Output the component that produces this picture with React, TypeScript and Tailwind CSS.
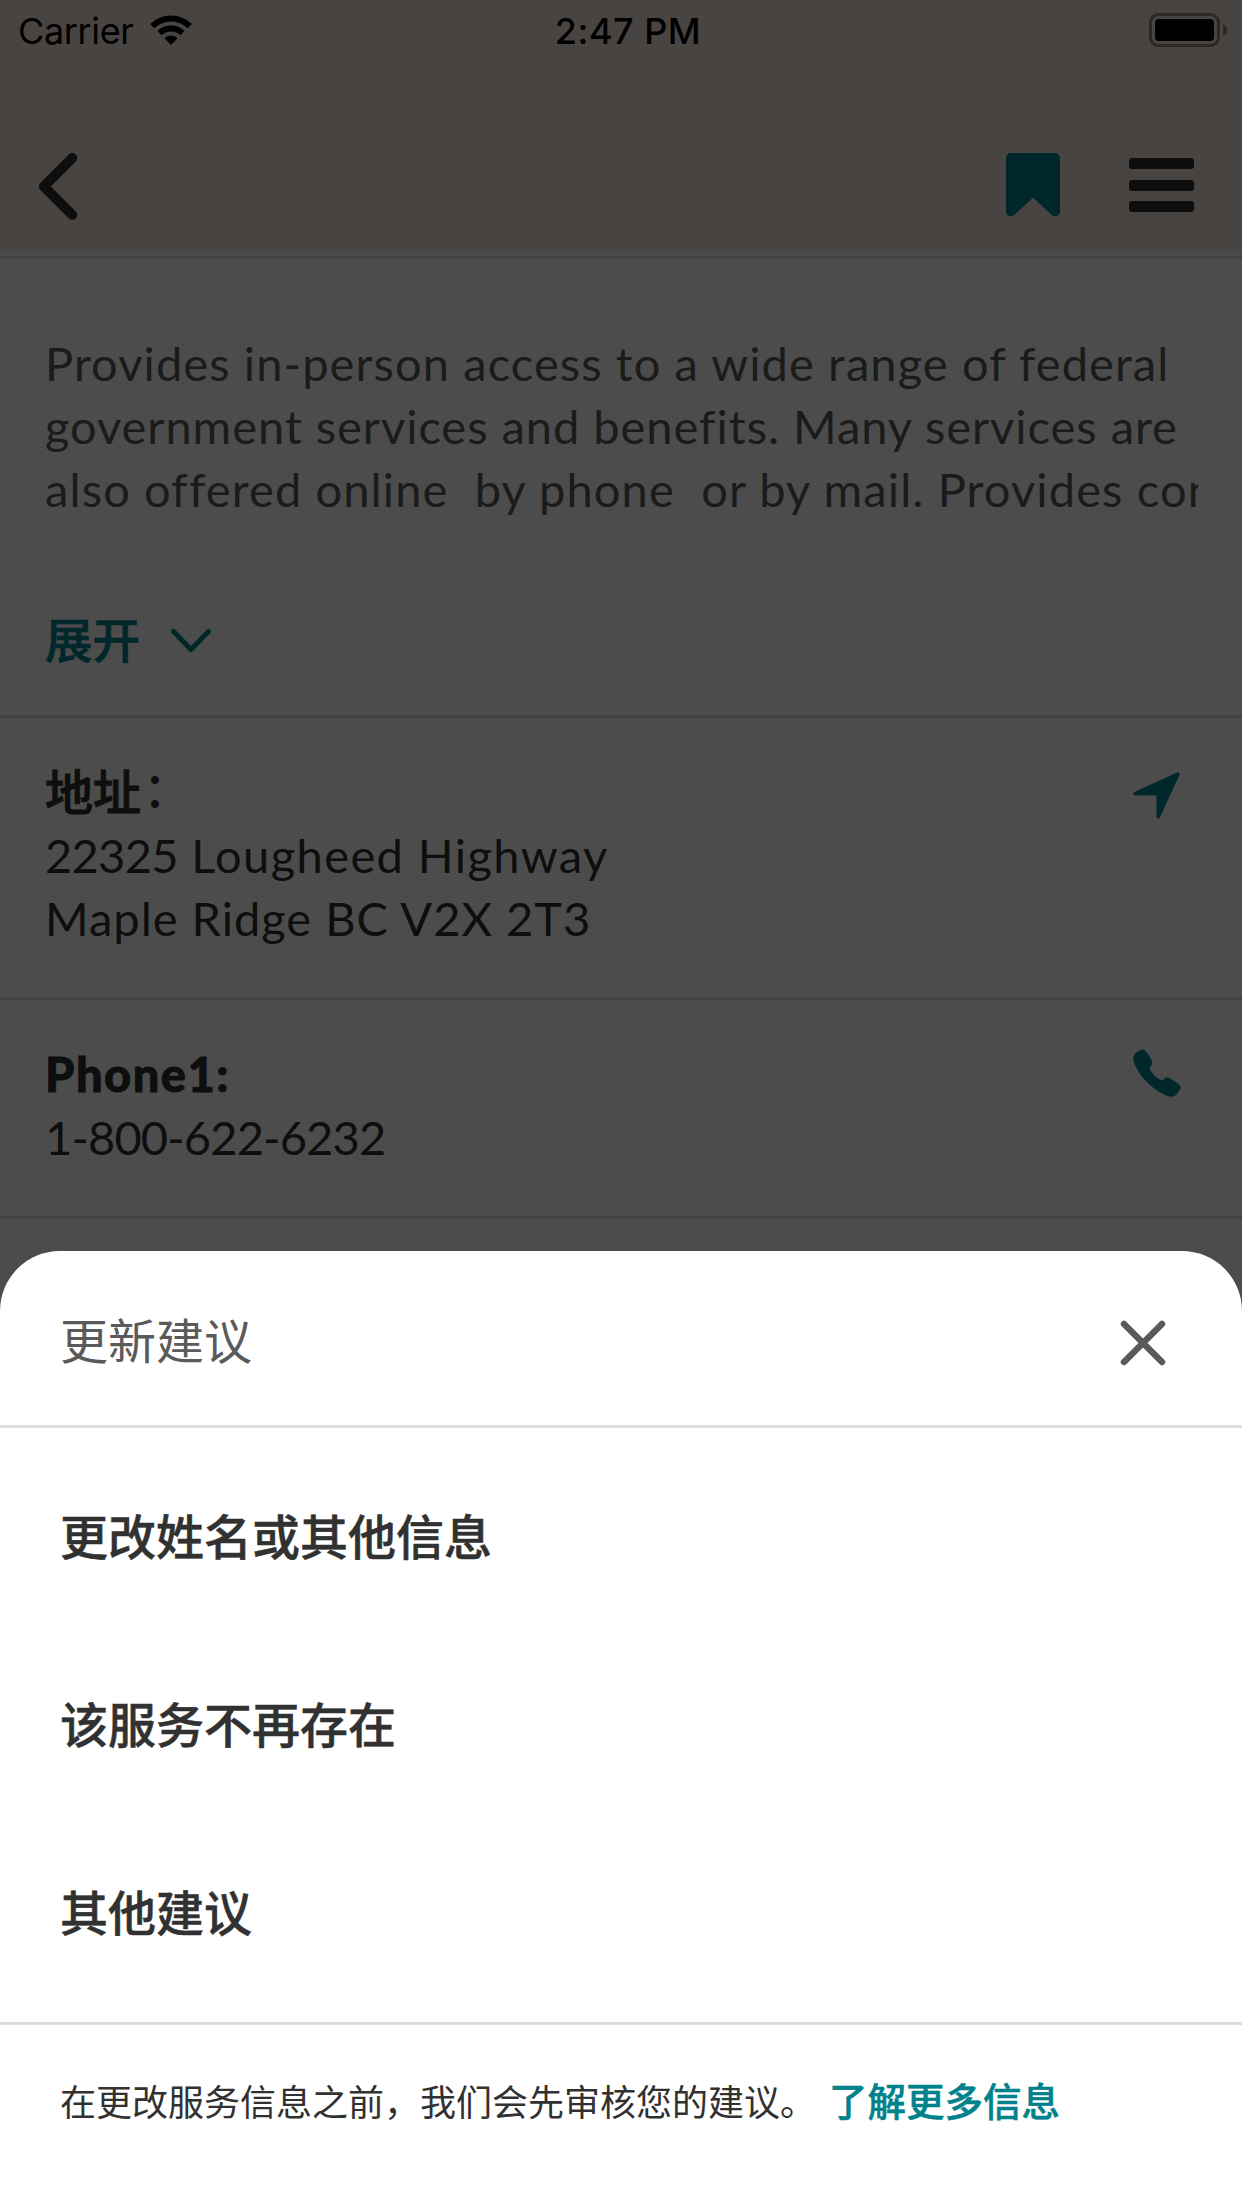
import type { ReactNode } from "react";
import { IoCall, IoNavigate } from "react-icons/io5";

const cjk = "font-['Noto_Sans_CJK_SC',sans-serif]";
const latin = "font-['Lato','Noto_Sans_CJK_SC',sans-serif]";

function StatusBar() {
  return (
    <div className="grid h-[60px] grid-cols-[1fr_auto_1fr] items-start font-['Inter',sans-serif] text-[36px] leading-[62px] text-black">
      <div className="flex pl-[18px]">
        <span className="w-[132px] tracking-[-0.35px]">Carrier</span>
        <svg className="mt-[15px] h-[30px] w-[42px]" viewBox="0 0 42 30" fill="none">
          <path d="M2.2 11.2a26.8 26.8 0 0 1 37.6 0" stroke="#000" strokeWidth="6" />
          <path d="M9.6 18.2a16.4 16.4 0 0 1 22.8 0" stroke="#000" strokeWidth="6" />
          <path d="M21 30l-6.6-6.7a9.4 9.4 0 0 1 13.2 0z" fill="#000" />
        </svg>
      </div>
      <span className="pl-[14px] font-medium tracking-[0.5px]">2:47 PM</span>
      <div className="flex justify-end pt-[13px] pr-[15px]">
        <svg className="h-[34px] w-[78px]" viewBox="0 0 78 34">
          <rect x="1.5" y="1.5" width="68" height="31" rx="8" fill="none" stroke="#000" strokeOpacity="0.4" strokeWidth="3" />
          <rect x="6" y="6" width="59" height="22" rx="4" fill="#000" />
          <path d="M74 11v12c2.500-1 4-3.500 4-6s-1.500-5-4-6z" fill="#000" fillOpacity="0.4" />
        </svg>
      </div>
    </div>
  );
}

function NavBar() {
  return (
    <div className="flex h-[192px] items-start pt-[93px] pl-[38px]">
      <svg className="h-[67px] w-[40px]" viewBox="0 0 40 67" fill="none" stroke="#313131" strokeWidth="10" strokeLinecap="round" strokeLinejoin="round">
        <path d="M34.300 5L5.800 33.500 34.300 62" />
      </svg>
      <svg className="ml-auto h-[64px] w-[54px]" viewBox="0 0 54 64">
        <path d="M5 0h44a5 5 0 0 1 5 5v53.500c0 4.500-5 6.500-8.500 3.300L27 44.500 8.500 61.800C5 65 0 63 0 58.500V5a5 5 0 0 1 5-5z" fill="#00828c" />
      </svg>
      <div className="mt-[5px] mr-[48px] ml-[69px] flex w-[65px] flex-col gap-[10.500px]">
        <div className="h-[11px] rounded-[3px] bg-[#313131]" />
        <div className="h-[11px] rounded-[3px] bg-[#313131]" />
        <div className="h-[11px] rounded-[3px] bg-[#313131]" />
      </div>
    </div>
  );
}

function Row({ icon, className, children }: { icon: ReactNode; className: string; children: ReactNode }) {
  return (
    <section className={"flex items-start justify-between border-b-[3px] border-[#dddddd] pr-[62px] pl-[45px] text-[47px] leading-[63px] text-[#313131] " + className}>
      <div>{children}</div>
      {icon}
    </section>
  );
}

function Details() {
  return (
    <main className={latin}>
      <section className="border-t-[3px] border-b-[3px] border-[#dddddd] pt-[73px] pb-[46px] pl-[45px]">
        <div className="w-[1153px] overflow-hidden text-[47px] leading-[63px] whitespace-pre text-[#5a5a5a]">
          <p className="tracking-[1.1px]">Provides in-person access to a wide range of federal</p>
          <p className="tracking-[0.97px]">government services and benefits. Many services are</p>
          <p className="tracking-[1.12px]">also offered online  by phone  or by mail. Provides con</p>
        </div>
        <div className={"mt-[85px] flex h-[63px] text-[47.500px] leading-[63px] font-medium text-[#00828c] [-webkit-text-stroke:0.7px_currentColor] " + cjk}>
          <span className="w-[125px]">展开</span>
          <svg className="mt-[22px] h-[26px] w-[42px]" viewBox="0 0 42 26" fill="none" stroke="currentColor" strokeWidth="5" strokeLinecap="round" strokeLinejoin="round">
            <path d="M3.500 3.500L21 21.500 38.500 3.500" />
          </svg>
        </div>
      </section>
      <Row className="pt-[41px] pb-[47px]" icon={<IoNavigate className="mt-[8px] mr-[-5px] size-[57px] text-[#00828c]" />}>
        <h2 className={"mb-[5px] text-[48px] leading-[60px] font-medium [-webkit-text-stroke:1px_currentColor] " + cjk}>
          地址<span className="relative bottom-[3px] left-[2px] [-webkit-text-stroke:0px]">：</span>
        </h2>
        <p className="tracking-[1.4px]">
          <span className="tracking-[-0.7px]">22325</span> Lougheed Highway
        </p>
        <p className="tracking-[1px]">Maple Ridge BC V2X 2T3</p>
      </Row>
      <Row className="pt-[43px] pb-[47px]" icon={<IoCall className="mt-[3px] mr-[-4px] size-[54px] text-[#00828c]" />}>
        <h2 className="font-black tracking-[1.5px] [-webkit-text-stroke:0.8px_currentColor]">Phone1:</h2>
        <p className="tracking-[-0.85px]">1-800-622-6232</p>
      </Row>
    </main>
  );
}

function SuggestionSheet() {
  return (
    <div className={"absolute inset-x-0 bottom-0 h-[957px] rounded-t-[60px] bg-white text-[#313131] " + cjk}>
      <header className="flex h-[177px] items-center justify-between border-b-[3px] border-[#dddddd] pr-[76px] pl-[60px] text-[#5a5a5a]">
        <h1 className="text-[48px]">更新建议</h1>
        <svg className="mt-[9px] h-[46px] w-[46px]" viewBox="0 0 46 46" fill="none" stroke="currentColor" strokeWidth="6.500" strokeLinecap="round">
          <path d="M4 4l38 38M42 4L4 42" />
        </svg>
      </header>
      <ul className="border-b-[3px] border-[#dddddd] pt-[12px] pb-[18px] pl-[60px] text-[48px] font-medium [-webkit-text-stroke:0.5px_currentColor]">
        <li className="flex h-[188px] items-center">更改姓名或其他信息</li>
        <li className="flex h-[188px] items-center">该服务不再存在</li>
        <li className="flex h-[188px] items-center">其他建议</li>
      </ul>
      <p className="flex pt-[48px] pl-[60px] text-[36px] leading-[54px]">
        <span className="w-[769px]">在更改服务信息之前，我们会先审核您的建议。</span>
        <a className="mt-[-1px] text-[38.500px] font-medium text-[#00828c] [-webkit-text-stroke:0.5px_currentColor]">了解更多信息</a>
      </p>
    </div>
  );
}

export default function App() {
  return (
    <div className="relative h-[2208px] w-[1242px] overflow-hidden bg-white">
      <div className="border-b-[4px] border-[#f8fcfe] bg-[#f0e3da]">
        <StatusBar />
        <NavBar />
      </div>
      <Details />
      <div className="absolute inset-0 bg-black/70" />
      <SuggestionSheet />
    </div>
  );
}
